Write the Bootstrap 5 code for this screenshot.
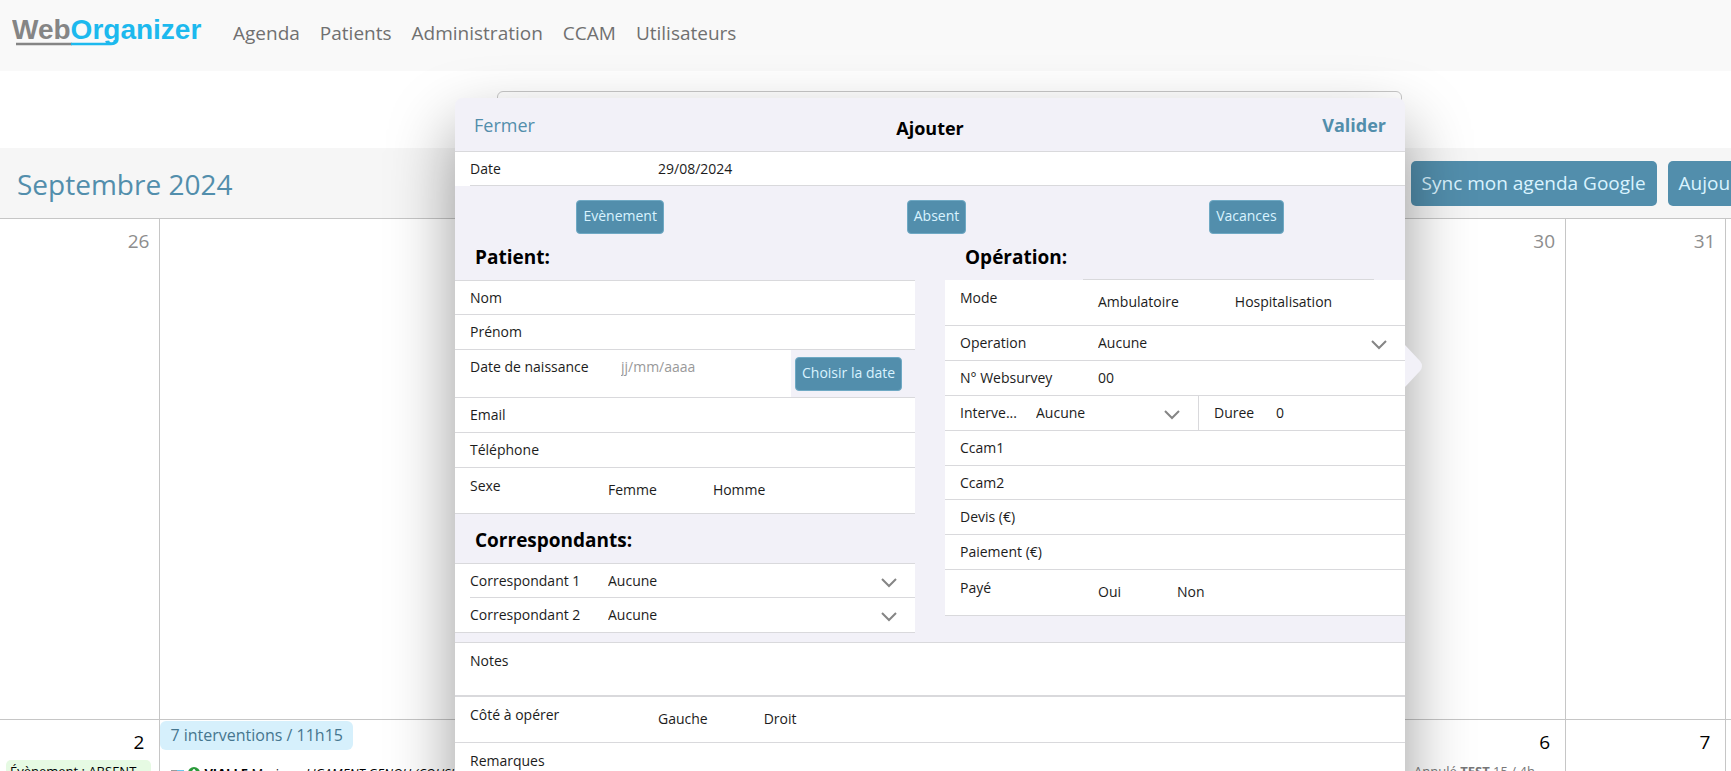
<!DOCTYPE html>
<html lang="fr">
<head>
<meta charset="utf-8">
<meta name="viewport" content="width=device-width, initial-scale=1">
<title>WebOrganizer - Agenda</title>
<link href="https://cdn.jsdelivr.net/npm/bootstrap@5.3.0/dist/css/bootstrap.min.css" rel="stylesheet">
<style>
:root{--accent:#528eac;--panel:#f2f1f8;--line:#d9d9dc}
body{font-family:"Open Sans","Noto Sans",sans-serif;background:#fff;color:#000}
.page{height:100vh;overflow:hidden;position:relative}
.topbar{height:71px;background:#f9f9f9;padding:0 12px}
.topbar .nav{gap:20px;padding:21px 0 0 25px}
.topbar .nav-link{color:#707070;font-size:19px;line-height:24px;padding:0}
/* the planning is a little wider than the window */
.wide{width:109%}
.strip{height:77px;padding:20px 0 0 497px}
.search-panel{width:905px;height:57px;border:1px solid #c8c8c8;border-radius:6px}
.toolbar{height:70px;background:#f6f6f6;padding:0 94px 0 17px;gap:11px}
.toolbar h1{font-size:28px;line-height:40px;color:var(--accent);margin:0;padding-top:2px}
.btn-accent{--bs-btn-bg:var(--accent);--bs-btn-color:#d9f3ff;--bs-btn-border-color:#6fa9c4;--bs-btn-hover-bg:#44809e;--bs-btn-hover-color:#fff}
.btn-bar{height:45px;font-size:19px;line-height:28px;padding:6px 11px;border-radius:5px;border:0;white-space:nowrap}
.btn-form{height:34px;font-size:14px;line-height:20px;padding:4px 6px 6px;border-radius:4px}
.month{table-layout:fixed;border-collapse:separate;border-spacing:0}
.month td{border:solid #c6c6c6;border-width:1px 1px 0 0;height:501px;vertical-align:top;padding:0;white-space:nowrap;overflow:hidden}
.month .narrow{width:8.5%}
.month .friday{width:8.9%}
.day{text-align:right;font-size:19px;line-height:26px;padding:9px 10px 0 0}
.out{color:#8d8d8d}
.now{padding-right:15px}
.evt{font-size:13px;line-height:16px}
.evt-green{background:#e6fae3;border-radius:5px;margin:5px 8px 0 6px;padding:3px 4px}
.evt-list{padding:15px 10px 0 11px;gap:4px}
.evt-off{color:#777;margin:4px 10px 0 8px;padding:4px 8px}
.tally{background:#d6f0fc;color:#46768f;font-size:16px;line-height:24px;padding:2px 10px 3px;border-radius:6px;margin-top:1px}
.popup{position:absolute;z-index:5;top:98px;left:455px;width:950px;height:800px;background:var(--panel);border-radius:8px 8px 0 0;box-shadow:0 30px 66px rgba(0,0,0,.4)}
.popup-arrow{position:absolute;left:100%;top:247px}
.popup-head{height:54px;border-bottom:1px solid var(--line);padding:14px 19px 0}
.popup-head .btn{border:0;padding:0;font-size:18px;line-height:26px;color:var(--accent);flex:1 1 0}
.popup-head h2{font-size:18px;line-height:26px;font-weight:700;margin:0;padding-top:3px}
.frow{background:#fff;border-bottom:1px solid var(--line);height:35px;display:flex;padding-left:15px;font-size:14px;line-height:20px}
.frow-low{height:34px}
.inset{position:relative;border-bottom:0}
.inset::after{content:"";position:absolute;left:15px;right:0;bottom:0;border-bottom:1px solid var(--line)}
.cap{flex:none;padding-top:7px;color:#1c1c1c}
.entry{appearance:none;border:0;background-color:transparent;padding:7px 0;outline:0;color:#1c1c1c;flex:1 1 0;min-width:0;font-size:14px;line-height:20px;resize:none}
.entry::placeholder{color:#999}
select.entry{padding:6px 40px 6px 0;background:url("data:image/svg+xml,%3Csvg xmlns='http://www.w3.org/2000/svg' width='16' height='10'%3E%3Cpath d='M1 1l7 7 7-7' fill='none' stroke='%23858585' stroke-width='2'/%3E%3C/svg%3E") no-repeat right 18px top 14px}
.tall{height:46px}
.tall .cap{padding-top:8px}
.pick{gap:56px;padding-top:12px;color:#1c1c1c}
.mode{position:relative}
.mode::before{content:"";position:absolute;left:-15px;right:-42px;top:-1px;border-top:1px solid var(--line)}
.lab-a{width:138px}.lab-b{width:188px}.lab-c{width:76px}.lab-d{width:151px}.lab-e{width:62px}
.two{display:grid;grid-template-columns:1fr 1fr;gap:30px}
.sect{font-size:19px;line-height:26px;font-weight:700;margin:0;padding-left:20px}
.sect-top{height:46px;padding-top:10px}
.sect-mid{height:49px;padding-top:13px}
.kinds{height:48px;padding-top:14px}
.first{border-top:1px solid var(--line)}
.birth{height:48px;border-bottom:1px solid var(--line)}
.birth .frow{width:336px;height:47px;border:0}
.birth .btn{margin:7px 0 0 4px}
.split{border-left:1px solid var(--line);padding-left:15px;width:207px}
.notes{height:55px;border-bottom-width:2px}
.notes .cap{padding-top:8px}
.below{margin-top:9px}
</style>
</head>
<body>
<div class="page">
<nav class="topbar d-flex align-items-start">
  <a href="#" aria-label="WebOrganizer"><svg class="d-block" width="196" height="50" viewBox="0 0 196 50"><text x="0" y="39" font-family="Liberation Sans, sans-serif" font-weight="700" font-size="28" fill="#858585">Web<tspan fill="#1db9ee">Organizer</tspan></text><path d="M4 44H60" stroke="#858585" stroke-width="2.6"/><path d="M59 44H99Q103 44 103 40" fill="none" stroke="#1db9ee" stroke-width="2.6"/></svg></a>
  <ul class="nav flex-nowrap">
    <li><a class="nav-link" href="#">Agenda</a></li>
    <li><a class="nav-link" href="#">Patients</a></li>
    <li><a class="nav-link" href="#">Administration</a></li>
    <li><a class="nav-link" href="#">CCAM</a></li>
    <li><a class="nav-link" href="#">Utilisateurs</a></li>
  </ul>
</nav>
<div class="strip wide"><div class="search-panel"></div></div>
<header class="toolbar wide d-flex align-items-center">
  <h1 class="me-auto fw-normal">Septembre 2024</h1>
  <button class="btn btn-accent btn-bar" type="button">Sync mon agenda Google</button>
  <button class="btn btn-accent btn-bar" type="button">Aujourd'hui</button>
</header>
<table class="month wide">
  <colgroup><col class="narrow"><col><col><col><col class="friday"><col class="narrow"><col class="narrow"></colgroup>
  <tbody>
  <tr>
    <td><div class="day out">26</div></td><td></td><td></td><td></td>
    <td><div class="day out">30</div></td><td><div class="day out">31</div></td><td></td>
  </tr>
  <tr>
    <td><div class="day now">2</div><div class="evt evt-green">Évènement : ABSENT</div></td>
    <td><div class="d-flex"><span class="tally">7 interventions / 11h15</span></div>
      <div class="evt evt-list d-flex align-items-center">
        <svg width="13" height="12" viewBox="0 0 13 12"><rect y="3" width="6" height="5" fill="#9a9a9a"/><rect x="6" y="3" width="7" height="5" fill="#6cc6ea"/></svg>
        <svg width="12" height="12" viewBox="0 0 12 12"><circle cx="6" cy="6" r="6" fill="#2a9a3a"/><path d="M6 2v8M3 6l3-3 3 3" fill="none" stroke="#fff" stroke-width="1.5"/></svg>
        <span><b>VIALLE</b> Marion - <i>LIGAMENT GENOU (COUSIN)</i></span>
      </div></td>
    <td></td><td></td>
    <td><div class="day now">6</div><div class="evt evt-off">Annulé <b>TEST</b> 15 / 4h</div></td>
    <td><div class="day now">7</div></td><td></td>
  </tr>
  </tbody>
</table>

<form class="popup">
  <svg class="popup-arrow" width="18" height="42" viewBox="0 0 18 42"><path d="M0 0L15 16Q19 21 15 26L0 42Z" fill="#f2f1f8"/></svg>
  <div class="popup-head d-flex align-items-start">
    <button class="btn text-start" type="button">Fermer</button>
    <h2>Ajouter</h2>
    <button class="btn text-end fw-bold" type="submit">Valider</button>
  </div>
  <div class="frow inset frow-low"><label class="cap lab-b" for="date">Date</label><input class="entry" id="date" type="text" value="29/08/2024"></div>
  <div class="kinds d-flex justify-content-around">
    <button class="btn btn-accent btn-form" type="button">Evènement</button>
    <button class="btn btn-accent btn-form" type="button">Absent</button>
    <button class="btn btn-accent btn-form" type="button">Vacances</button>
  </div>
  <div class="two">
    <div>
      <h3 class="sect sect-top">Patient:</h3>
      <div class="frow first"><label class="cap lab-a" for="nom">Nom</label><input class="entry" id="nom" type="text"></div>
      <div class="frow"><label class="cap lab-a" for="prenom">Prénom</label><input class="entry" id="prenom" type="text"></div>
      <div class="birth d-flex align-items-start">
        <div class="frow"><label class="cap lab-d" for="naiss">Date de naissance</label><input class="entry mb-auto" id="naiss" type="text" placeholder="jj/mm/aaaa"></div>
        <button class="btn btn-accent btn-form" type="button">Choisir la date</button>
      </div>
      <div class="frow"><label class="cap lab-a" for="email">Email</label><input class="entry" id="email" type="text"></div>
      <div class="frow"><label class="cap lab-a" for="tel">Téléphone</label><input class="entry" id="tel" type="text"></div>
      <div class="frow tall"><span class="cap lab-a">Sexe</span><div class="pick d-flex">
        <label><input class="visually-hidden" type="radio" name="sexe">Femme</label><label><input class="visually-hidden" type="radio" name="sexe">Homme</label></div></div>
      <h3 class="sect sect-mid">Correspondants:</h3>
      <div class="frow inset first"><label class="cap lab-a" for="c1">Correspondant 1</label><select class="entry" id="c1"><option>Aucune</option></select></div>
      <div class="frow"><label class="cap lab-a" for="c2">Correspondant 2</label><select class="entry" id="c2"><option>Aucune</option></select></div>
    </div>
    <div>
      <h3 class="sect sect-top">Opération:</h3>
      <div class="frow tall"><span class="cap lab-a">Mode</span><div class="pick mode d-flex">
        <label><input class="visually-hidden" type="radio" name="mode">Ambulatoire</label><label><input class="visually-hidden" type="radio" name="mode">Hospitalisation</label></div></div>
      <div class="frow"><label class="cap lab-a" for="op">Operation</label><select class="entry" id="op"><option>Aucune</option></select></div>
      <div class="frow"><label class="cap lab-a" for="ws">N° Websurvey</label><input class="entry" id="ws" type="text" value="00"></div>
      <div class="frow"><label class="cap lab-c" for="interv">Interve...</label><select class="entry" id="interv"><option>Aucune</option></select>
        <div class="split d-flex"><label class="cap lab-e" for="duree">Duree</label><input class="entry" id="duree" type="text" value="0"></div></div>
      <div class="frow"><label class="cap lab-a" for="cc1">Ccam1</label><input class="entry" id="cc1" type="text"></div>
      <div class="frow frow-low"><label class="cap lab-a" for="cc2">Ccam2</label><input class="entry" id="cc2" type="text"></div>
      <div class="frow"><label class="cap lab-a" for="devis">Devis (€)</label><input class="entry" id="devis" type="text"></div>
      <div class="frow"><label class="cap lab-a" for="paie">Paiement (€)</label><input class="entry" id="paie" type="text"></div>
      <div class="frow tall"><span class="cap lab-a">Payé</span><div class="pick d-flex">
        <label><input class="visually-hidden" type="radio" name="paye">Oui</label><label><input class="visually-hidden" type="radio" name="paye">Non</label></div></div>
    </div>
  </div>
  <div class="frow first notes below"><label class="cap lab-b" for="notes">Notes</label><textarea class="entry" id="notes"></textarea></div>
  <div class="frow tall"><span class="cap lab-b">Côté à opérer</span><div class="pick d-flex">
    <label><input class="visually-hidden" type="radio" name="cote">Gauche</label><label><input class="visually-hidden" type="radio" name="cote">Droit</label></div></div>
  <div class="frow notes"><label class="cap lab-b" for="rem">Remarques</label><textarea class="entry" id="rem"></textarea></div>
</form>
</div>
<script src="https://cdn.jsdelivr.net/npm/bootstrap@5.3.0/dist/js/bootstrap.bundle.min.js"></script>
</body>
</html>
